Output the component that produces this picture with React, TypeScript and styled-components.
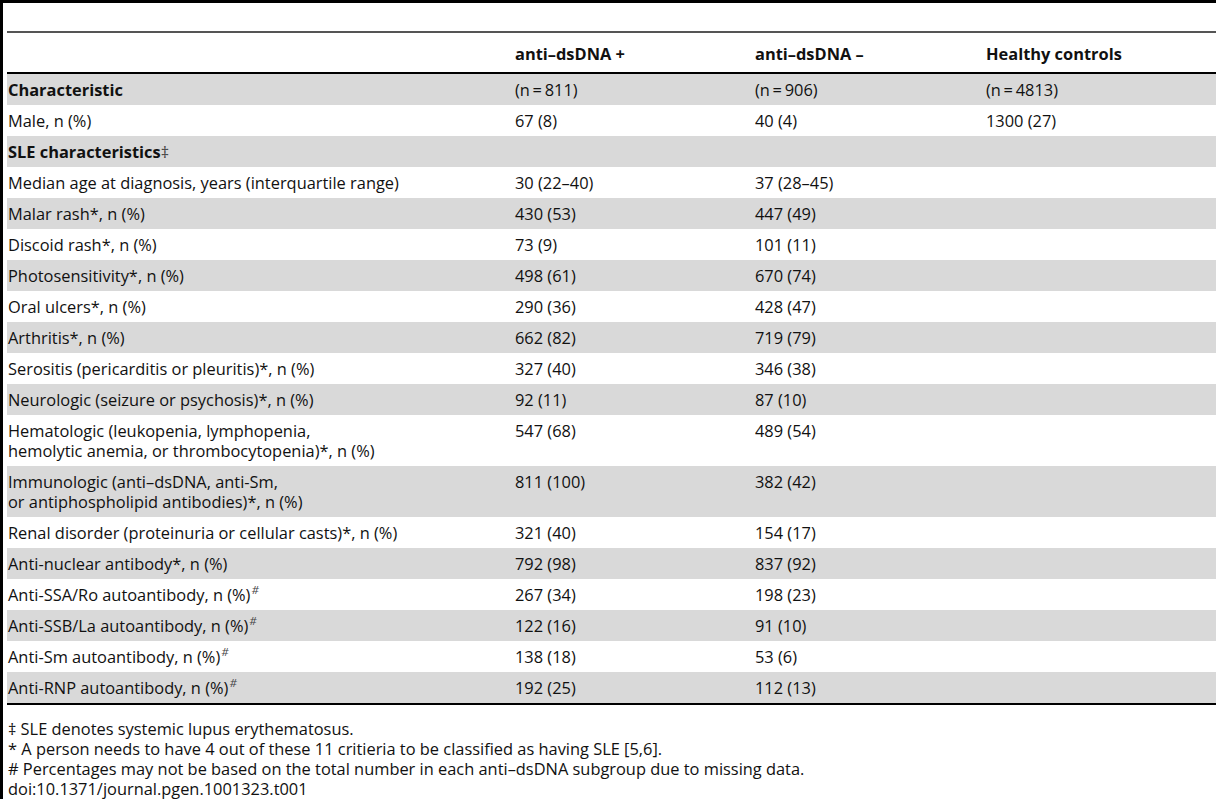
import styled, { createGlobalStyle } from "styled-components";

const GlobalStyle = createGlobalStyle`
  html, body {
    margin: 0;
    padding: 0;
    background: #fff;
  }
  body {
    font-family: "Open Sans", "Liberation Sans", sans-serif;
    color: #111;
  }
`;

const Frame = styled.div`
  border-left: 3px solid #000;
  border-top: 3px solid #000;
  padding-left: 4px;
  min-height: 797px;
  box-sizing: border-box;
`;

const Table = styled.table`
  width: 100%;
  border-collapse: collapse;
  table-layout: fixed;
  font-size: 16.4px;
  line-height: 20px;
`;

const Caption = styled.tr`
  height: 29px;
  border-bottom: 2px solid #555;
`;

const HeadRow = styled.tr`
  height: 41px;
  border-bottom: 2px solid #000;
`;

const HeadCell = styled.th`
  text-align: left;
  font-weight: 700;
  padding: 2px 0 0;
  vertical-align: middle;
`;

const Row = styled.tr<{ $shaded?: boolean; $last?: boolean }>`
  background: ${({ $shaded }) => ($shaded ? "#d9d9d9" : "#fff")};
  border-bottom: ${({ $last }) => ($last ? "2px solid #000" : "none")};
`;

const Cell = styled.td<{ $first?: boolean; $bold?: boolean }>`
  padding: 5.5px 0 5.5px ${({ $first }) => ($first ? "1px" : "0")};
  vertical-align: top;
  font-weight: ${({ $bold }) => ($bold ? 700 : 400)};
  white-space: pre-line;
`;

const Sup = styled.sup`
  font-size: 11.5px;
  line-height: 0;
  color: #444;
  margin-left: 1px;
  font-style: italic;
`;

const Dagger = styled.span`
  font-weight: 400;
  color: #444;
`;

const Notes = styled.div`
  padding: 14px 0 0 1px;
  font-size: 16.4px;
  line-height: 20px;
`;

const Note = styled.p`
  margin: 0;
  height: 20px;
`;

type Item = {
  label: string;
  plus?: string;
  minus?: string;
  healthy?: string;
  bold?: boolean;
  hash?: boolean;
  dagger?: boolean;
};

const rows: Item[] = [
  { label: "Characteristic", plus: "(n\u2009=\u2009811)", minus: "(n\u2009=\u2009906)", healthy: "(n\u2009=\u20094813)", bold: true },
  { label: "Male, n (%)", plus: "67 (8)", minus: "40 (4)", healthy: "1300 (27)" },
  { label: "SLE characteristics", bold: true, dagger: true },
  { label: "Median age at diagnosis, years (interquartile range)", plus: "30 (22\u201340)", minus: "37 (28\u201345)" },
  { label: "Malar rash*, n (%)", plus: "430 (53)", minus: "447 (49)" },
  { label: "Discoid rash*, n (%)", plus: "73 (9)", minus: "101 (11)" },
  { label: "Photosensitivity*, n (%)", plus: "498 (61)", minus: "670 (74)" },
  { label: "Oral ulcers*, n (%)", plus: "290 (36)", minus: "428 (47)" },
  { label: "Arthritis*, n (%)", plus: "662 (82)", minus: "719 (79)" },
  { label: "Serositis (pericarditis or pleuritis)*, n (%)", plus: "327 (40)", minus: "346 (38)" },
  { label: "Neurologic (seizure or psychosis)*, n (%)", plus: "92 (11)", minus: "87 (10)" },
  {
    label: "Hematologic (leukopenia, lymphopenia,\nhemolytic anemia, or thrombocytopenia)*, n (%)",
    plus: "547 (68)",
    minus: "489 (54)",
  },
  {
    label: "Immunologic (anti\u2013dsDNA, anti-Sm,\nor antiphospholipid antibodies)*, n (%)",
    plus: "811 (100)",
    minus: "382 (42)",
  },
  { label: "Renal disorder (proteinuria or cellular casts)*, n (%)", plus: "321 (40)", minus: "154 (17)" },
  { label: "Anti-nuclear antibody*, n (%)", plus: "792 (98)", minus: "837 (92)" },
  { label: "Anti-SSA/Ro autoantibody, n (%)", plus: "267 (34)", minus: "198 (23)", hash: true },
  { label: "Anti-SSB/La autoantibody, n (%)", plus: "122 (16)", minus: "91 (10)", hash: true },
  { label: "Anti-Sm autoantibody, n (%)", plus: "138 (18)", minus: "53 (6)", hash: true },
  { label: "Anti-RNP autoantibody, n (%)", plus: "192 (25)", minus: "112 (13)", hash: true },
];

export default function App() {
  return (
    <>
      <GlobalStyle />
      <Frame>
        <Table>
          <colgroup>
            <col style={{ width: 508 }} />
            <col style={{ width: 240 }} />
            <col style={{ width: 231 }} />
            <col />
          </colgroup>
          <thead>
            <Caption>
              <th colSpan={4} />
            </Caption>
            <HeadRow>
              <HeadCell />
              <HeadCell>anti&ndash;dsDNA +</HeadCell>
              <HeadCell>anti&ndash;dsDNA &ndash;</HeadCell>
              <HeadCell>Healthy controls</HeadCell>
            </HeadRow>
          </thead>
          <tbody>
            {rows.map((r, i) => (
              <Row key={r.label} $shaded={i % 2 === 0} $last={i === rows.length - 1}>
                <Cell $first $bold={r.bold}>
                  {r.label}
                  {r.dagger && <Dagger>&Dagger;</Dagger>}
                  {r.hash && <Sup>#</Sup>}
                </Cell>
                <Cell>{r.plus}</Cell>
                <Cell>{r.minus}</Cell>
                <Cell>{r.healthy}</Cell>
              </Row>
            ))}
          </tbody>
        </Table>
        <Notes>
          <Note>&Dagger; SLE denotes systemic lupus erythematosus.</Note>
          <Note>* A person needs to have 4 out of these 11 critieria to be classified as having SLE [5,6].</Note>
          <Note># Percentages may not be based on the total number in each anti&ndash;dsDNA subgroup due to missing data.</Note>
          <Note>doi:10.1371/journal.pgen.1001323.t001</Note>
        </Notes>
      </Frame>
    </>
  );
}
